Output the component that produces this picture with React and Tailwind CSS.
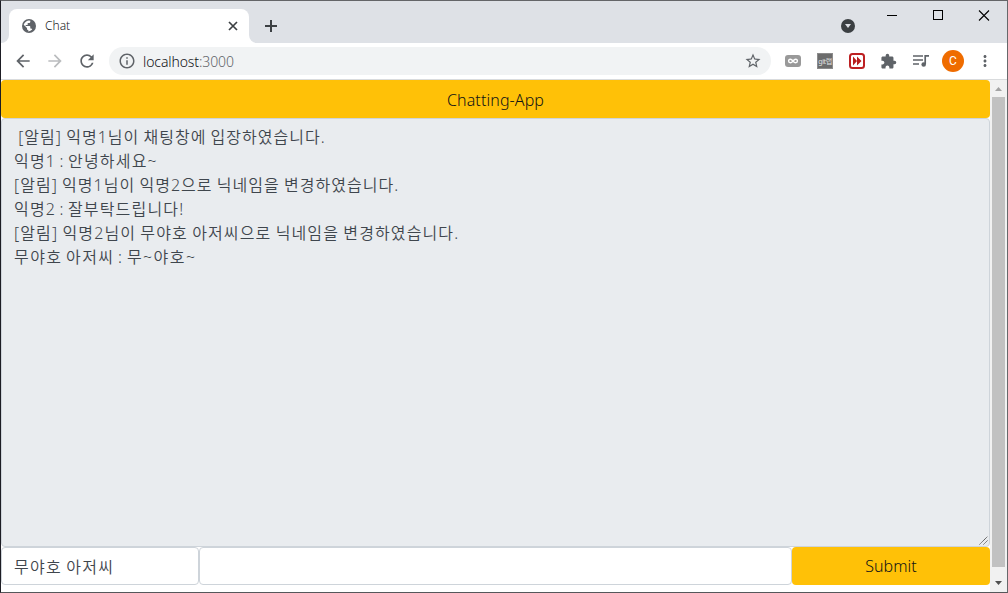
import {
  MdArrowBack,
  MdArrowForward,
  MdExtension,
  MdInfoOutline,
  MdMoreVert,
  MdRefresh,
  MdStarOutline,
} from "react-icons/md";

const messages = [
  { text: "\u00a0[알림] 익명1님이 채팅창에 입장하였습니다.", spacing: "tracking-[1.02px] [word-spacing:-1px]" },
  { text: "익명1 : 안녕하세요~", spacing: "tracking-[1.2px] [word-spacing:-2px]" },
  { text: "[알림] 익명1님이 익명2으로 닉네임을 변경하였습니다.", spacing: "tracking-[1.03px] [word-spacing:-1px]" },
  { text: "익명2 : 잘부탁드립니다!", spacing: "tracking-[1.18px] [word-spacing:-2px]" },
  { text: "[알림] 익명2님이 무야호 아저씨으로 닉네임을 변경하였습니다.", spacing: "tracking-[1.12px] [word-spacing:-1px]" },
  { text: "무야호 아저씨 : 무~야호~", spacing: "tracking-[1.42px] [word-spacing:-2px]" },
];

function TabStrip() {
  return (
    <div className="flex h-[42px] shrink-0 bg-[#dee1e6]">
      {/* Active tab with the curved feet */}
      <div className="flex h-full items-end">
        <div className="h-2 w-2 bg-white">
          <div className="h-2 w-2 rounded-br-lg bg-[#dee1e6]" />
        </div>
        <div className="flex h-[34px] w-60 items-center rounded-t-lg bg-white pr-[11px] pl-3">
          <svg width="16" height="16" viewBox="0 0 16 16">
            <circle cx="8" cy="8" r="7" fill="#5f6368" />
            <path
              d="M9.300 2.700v1.100c0 .8-.6 1.300-1.300 1.300H6.700v1.300c0 .4-.3.7-.7.7H4.700V8h3.900c.4 0 .7.300.7.700v1.900h.7c.6 0 1.100.4 1.200.9A5.500 5.500 0 0 1 7.300 13.400V12c-.8 0-1.300-.6-1.300-1.300V10L2.700 6.800A5.500 5.500 0 0 1 9.300 2.700z"
              fill="#fff"
            />
          </svg>
          <span className="ml-2 flex-1 text-xs font-[350] text-[#202124]">Chat</span>
          <svg width="10" height="10" viewBox="0 0 10 10">
            <path d="M1 1l8 8M9 1L1 9" stroke="#3c4043" strokeWidth="1.7" />
          </svg>
        </div>
        <div className="h-2 w-2 bg-white">
          <div className="h-2 w-2 rounded-bl-lg bg-[#dee1e6]" />
        </div>
      </div>
      <svg className="mt-[19px] ml-2" width="12" height="12" viewBox="0 0 12 12">
        <path d="M6 0v12M0 6h12" stroke="#3c4043" strokeWidth="2" />
      </svg>

      {/* Window controls */}
      <div className="ml-auto flex">
        <svg className="mt-[18px]" width="14" height="14" viewBox="0 0 14 14">
          <circle cx="7" cy="7" r="7" fill="#3c4043" />
          <path d="M4 5h6L7 9z" fill="#dee1e6" />
        </svg>
        <div className="ml-[14px] flex h-[29px] items-center">
          <svg width="46" height="11" viewBox="0 0 46 11" shapeRendering="crispEdges">
            <path d="M18 5.5h10" stroke="#000" />
          </svg>
          <svg width="46" height="11" viewBox="0 0 46 11" shapeRendering="crispEdges">
            <path d="M18.5.5h9v9h-9z" fill="none" stroke="#000" />
          </svg>
          <svg width="46" height="11" viewBox="0 0 46 11">
            <path d="M18 .5l10 10M28 .5l-10 10" stroke="#000" strokeWidth="1.1" />
          </svg>
        </div>
      </div>
    </div>
  );
}

function Toolbar() {
  return (
    <div className="flex h-[37px] shrink-0 items-center border-b border-[#d9dbdd] bg-white pr-[13px] pl-3 text-[#5f6368]">
      <MdArrowBack size={20} />
      <MdArrowForward size={20} className="ml-3 text-[#babcbe]" />
      <MdRefresh size={20} className="ml-3" />
      <div className="ml-3 flex h-7 w-[662px] items-center rounded-full bg-[#f1f3f4] pr-[9px] pl-[9px]">
        <MdInfoOutline size={18} />
        <span className="ml-[7px] flex-1 text-[14px] font-[350] tracking-[-0.1px] text-[#5f6368]">
          <span className="text-[#101114]">localhost</span>:3000
        </span>
        <MdStarOutline size={18} />
      </div>

      {/* Extensions */}
      <svg className="ml-[14px]" width="16" height="16" viewBox="0 0 16 16">
        <rect y="2" width="16" height="12" rx="3" fill="#999" />
        <path
          d="M8 8C7 6.7 6.3 6.2 5.4 6.2a1.8 1.8 0 0 0 0 3.6C6.3 9.8 7 9.3 8 8s1.7-1.8 2.6-1.8a1.8 1.8 0 0 1 0 3.6C9.7 9.8 9 9.3 8 8z"
          fill="none"
          stroke="#fff"
          strokeWidth="1.4"
        />
      </svg>
      <div className="ml-4 flex h-4 w-4 items-center justify-center border border-[#8b8b8b] bg-[#6c6c6c] text-[7px] leading-none tracking-[-0.4px] whitespace-nowrap text-[#e0e0e0]">
        git랩
      </div>
      <svg className="ml-4" width="16" height="16" viewBox="0 0 16 16">
        <rect x="1" y="1" width="14" height="14" rx="2.5" fill="#fff" stroke="#bd2022" strokeWidth="2" />
        <path d="M4 3.500l4 4.500-4 4.500zM8 3.500l4.500 4.500L8 12.500z" fill="#b71c1c" />
      </svg>
      <MdExtension size={17} className="ml-[15px]" />
      <svg className="ml-4" width="16" height="14" viewBox="0 0 16 14">
        <path d="M0 2h10M0 6h10M0 10h6" stroke="#5f6368" strokeWidth="1.6" />
        <path d="M12.200 10V1.800H16" fill="none" stroke="#5f6368" strokeWidth="1.7" />
        <circle cx="10.700" cy="10.500" r="2.300" fill="#5f6368" />
      </svg>
      <div className="ml-[13px] flex h-[22px] w-[22px] items-center justify-center rounded-full bg-[#ef6c00] font-[Roboto] text-xs text-white">
        C
      </div>
      <MdMoreVert size={18} className="ml-auto" />
    </div>
  );
}

function Scrollbar() {
  return (
    <div className="flex w-[17px] shrink-0 flex-col items-center bg-[#f1f1f1]">
      <svg width="17" height="17" viewBox="0 0 17 17">
        <path d="M5 11h7L8.500 7z" fill="#a3a3a3" />
      </svg>
      <div className="h-[470px] w-[13px] bg-[#c1c1c1]" />
      <svg className="mt-auto" width="17" height="17" viewBox="0 0 17 17">
        <path d="M5 6h7L8.500 10z" fill="#505050" />
      </svg>
    </div>
  );
}

function ChatPage() {
  return (
    <div className="flex min-w-0 flex-1 flex-col bg-white text-base font-[350] text-[#3f464d]">
      <header className="flex h-[38px] shrink-0 items-center justify-center rounded bg-[#ffc107] pt-0.5 text-[#101316]">
        <span className="tracking-[0.1px]">Chatting-App</span>
      </header>
      <div className="relative h-[429px] shrink-0 rounded border border-[#ced4da] bg-[#e9ecef] px-3 py-1.5">
        {messages.map((m) => (
          <p key={m.text} className={`h-6 leading-6 whitespace-nowrap ${m.spacing}`}>
            {m.text}
          </p>
        ))}
        {/* Resize grip */}
        <svg className="absolute right-0 bottom-0" width="11" height="11" viewBox="0 0 11 11">
          <path d="M1.500 9.500l8-8M5.500 9.500l4-4" stroke="#555" strokeDasharray="1.3 .3" />
        </svg>
      </div>
      <div className="flex h-[38px] shrink-0">
        <div className="flex w-[198px] items-center rounded border border-[#ced4da] px-3 pt-0.5 tracking-[1.25px] [word-spacing:-1px]">
          무야호 아저씨
        </div>
        <div className="w-[593px] rounded border border-[#ced4da]" />
        <button className="flex-1 rounded bg-[#ffc107] text-[#101316]">Submit</button>
      </div>
    </div>
  );
}

export default function App() {
  return (
    <div className="flex h-[593px] w-[1008px] flex-col border border-t-[#646568] border-r-[#66686b] border-b-[#55575a] border-l-[#1d1d24] bg-white font-['Noto_Sans','Noto_Sans_CJK_KR',sans-serif]">
      <TabStrip />
      <Toolbar />
      <main className="flex min-h-0 flex-1">
        <ChatPage />
        <Scrollbar />
      </main>
    </div>
  );
}
